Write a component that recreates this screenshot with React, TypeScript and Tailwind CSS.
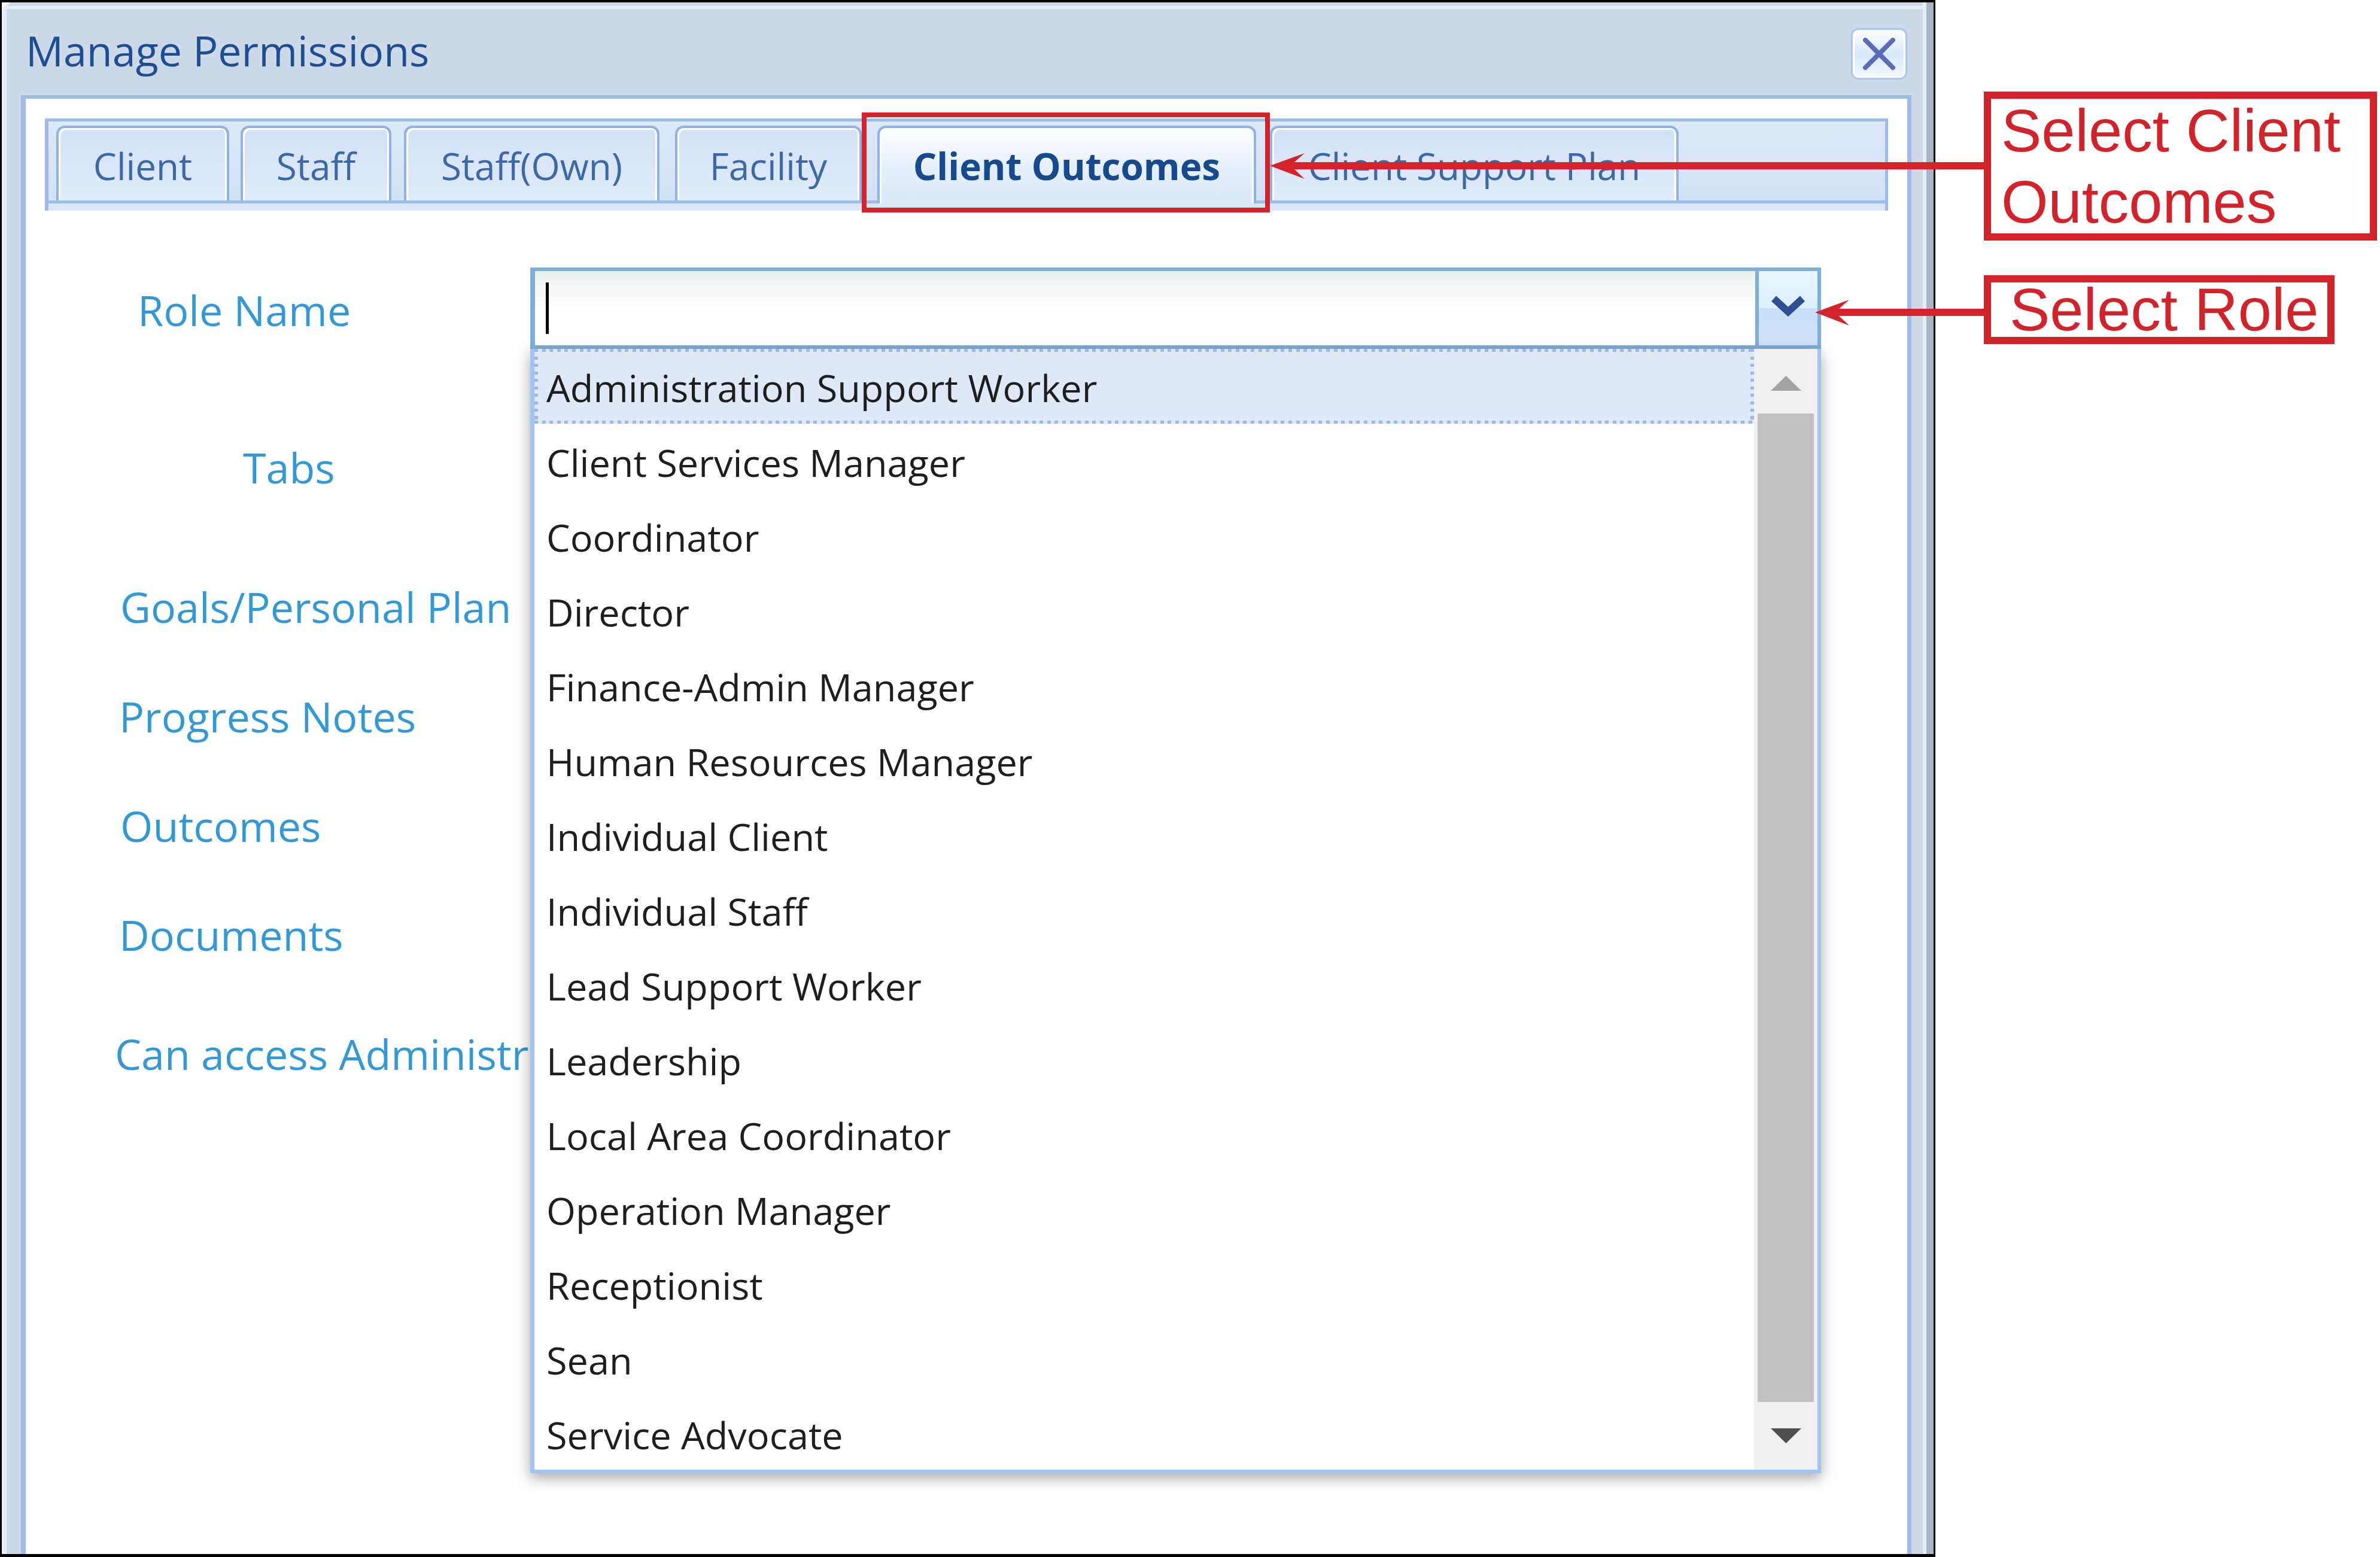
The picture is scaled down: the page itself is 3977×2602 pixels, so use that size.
import React from "react";

const roles = [
  "Administration Support Worker",
  "Client Services Manager",
  "Coordinator",
  "Director",
  "Finance-Admin Manager",
  "Human Resources Manager",
  "Individual Client",
  "Individual Staff",
  "Lead Support Worker",
  "Leadership",
  "Local Area Coordinator",
  "Operation Manager",
  "Receptionist",
  "Sean",
  "Service Advocate",
];

function Tab({ label, w, ml, active }: { label: string; w: string; ml: string; active?: boolean }) {
  if (active) {
    return (
      <div
        className={`${w} ${ml} relative z-10 -mb-[5px] h-[130px] flex-none rounded-t-[14px] border-[4px] border-b-0 border-[#8fb4e4] bg-gradient-to-b from-white via-[#e6f0fc] to-[#dce8f8] shadow-[inset_3px_3px_0_#ffffff,inset_-3px_0_0_#ffffff] flex justify-center pt-[21px]`}
      >
        <span className="text-[62px] leading-[85px] font-bold text-[#174a8c]">{label}</span>
      </div>
    );
  }
  return (
    <div
      className={`${w} ${ml} h-[125px] flex-none rounded-t-[14px] border-[4px] border-b-0 border-[#8fb4e4] bg-gradient-to-b from-[#d2e1f6] to-[#e1ecfb] shadow-[inset_3px_3px_0_#ffffff,inset_-3px_0_0_#ffffff] flex justify-center pt-[21px]`}
    >
      <span className="text-[62px] leading-[85px] text-[#3b69a8]">{label}</span>
    </div>
  );
}

function Label({ text, ml, mt }: { text: string; ml: string; mt: string }) {
  return (
    <div className={`${mt} h-[100px] flex items-center`}>
      <span className={`${ml} text-[70px] leading-[100px] whitespace-nowrap text-[#3399d6]`}>{text}</span>
    </div>
  );
}

export default function App() {
  return (
    <div
      className="relative flex w-[3977px] h-[2602px] bg-white overflow-hidden"
      style={{ fontFamily: "'Open Sans', 'Noto Sans', sans-serif" }}
    >
      {/* Dialog */}
      <div className="flex-none w-[3234px] h-[2602px] border-t-[4px] border-l-[3px] border-r-[3px] border-b-[5px] border-black">
        <div className="h-full flex flex-col bg-[#cdd9e6] border-l-[8px] border-l-[#e8eef6] border-r-[12px] border-r-[#a9b5c5] rounded-tl-[16px]">
          <div className="flex-1 flex flex-col border-r-[6px] border-r-[#e8eef6] min-h-0">
            <div className="h-[6px] flex-none" />
            <div className="h-[5px] flex-none bg-[#e8eef6]" />
            {/* Title row */}
            <div className="h-[144px] flex-none flex items-center justify-between pl-[32px] pr-[26px]">
              <span className="text-[70px] text-[#1d4d94] pb-[6px]">Manage Permissions</span>
              <div className="w-[94px] h-[86px] mt-[6px] rounded-[12px] border-[3px] border-[#a8c6ee] bg-gradient-to-b from-white via-[#d9e8fb] to-[#f4f8fe] shadow-[inset_0_0_0_3px_#ffffff] flex items-center justify-center">
                <svg width="54" height="54" viewBox="0 0 54 54">
                  <path d="M4 4 L50 50 M50 4 L4 50" stroke="#4a5fae" strokeWidth="8" strokeLinecap="round" opacity="0.9" />
                </svg>
              </div>
            </div>
            {/* Content */}
            <div className="flex-1 ml-[24px] mr-[19px] border-t-[6px] border-l-[8px] border-r-[7px] border-[#9dbde8] bg-white flex flex-col">
              {/* Tab strip */}
              <div className="mt-[33px] mx-[32px] h-[154px] flex-none border-t-[5px] border-l-[6px] border-r-[5px] border-[#9dbde8] bg-gradient-to-b from-[#dde9f9] to-[#d0e0f4] flex flex-col">
                <div className="h-[132px] flex items-end">
                  <Tab label="Client" w="w-[289px]" ml="ml-[13px]" />
                  <Tab label="Staff" w="w-[252px]" ml="ml-[19px]" />
                  <Tab label="Staff(Own)" w="w-[427px]" ml="ml-[21px]" />
                  <Tab label="Facility" w="w-[312px]" ml="ml-[26px]" />
                  <Tab label="Client Outcomes" w="w-[633px]" ml="ml-[26px]" active />
                  <Tab label="Client Support Plan" w="w-[683px]" ml="ml-[23px]" />
                </div>
                <div className="h-[5px] bg-[#9dbde8]" />
                <div className="h-[12px] bg-[#dce8f8]" />
              </div>

              {/* Form */}
              <div className="mt-[95px] flex flex-col">
                <div className="h-[136px] flex items-center">
                  <div className="w-[843px] flex-none pl-[187px] pt-[6px]">
                    <span className="text-[70px] leading-[100px] text-[#3399d6]">Role Name</span>
                  </div>
                  <div className="relative w-[2157px] h-[136px] flex-none">
                    <div className="h-full flex border-[6px] border-l-[8px] border-[#80aedb]">
                      <div className="flex-1 flex items-center bg-gradient-to-b from-[#eceeee] via-white to-white">
                        <div className="ml-[18px] w-[5px] h-[86px] bg-black" />
                      </div>
                      <div className="w-[104px] flex-none border-l-[6px] border-[#80aedb] flex flex-col relative">
                        <div className="h-1/2 bg-gradient-to-b from-[#eaf7ff] to-[#dbeffd]" />
                        <div className="h-1/2 bg-gradient-to-b from-[#c9e0f8] to-[#cfe3f9]" />
                        <div className="absolute inset-0 flex items-center justify-center pb-[8px]">
                          <svg width="58" height="36" viewBox="0 0 58 36">
                            <path d="M5 6 L29 28 L53 6" fill="none" stroke="#2f4f95" strokeWidth="12" />
                          </svg>
                        </div>
                      </div>
                    </div>

                    {/* Dropdown list */}
                    <div className="absolute left-0 top-full z-20 w-[2157px] h-[1879px] bg-white border-l-[7px] border-r-[6px] border-b-[6px] border-[#a3c4f3] shadow-[0_8px_22px_rgba(0,0,0,0.35)] flex">
                      <div className="w-[2038px] flex-none flex flex-col">
                        {roles.map((r, i) =>
                          i === 0 ? (
                            <div key={r} className="relative h-[125px] flex-none flex items-center pl-[20px] pt-[6px] bg-[#dfe8f6]">
                              <div className="absolute left-0 right-0 top-0 h-[5px] bg-[repeating-linear-gradient(90deg,#9db8e8_0px,#9db8e8_6px,transparent_6px,transparent_12.6px)]" />
                              <div className="absolute left-0 right-0 bottom-0 h-[5px] bg-[repeating-linear-gradient(90deg,#9db8e8_0px,#9db8e8_6px,transparent_6px,transparent_12.6px)]" />
                              <div className="absolute left-0 top-0 bottom-0 w-[6px] bg-[repeating-linear-gradient(180deg,#9db8e8_0px,#9db8e8_5px,transparent_5px,transparent_12.5px)]" />
                              <div className="absolute right-0 top-0 bottom-0 w-[6px] bg-[repeating-linear-gradient(180deg,#9db8e8_0px,#9db8e8_5px,transparent_5px,transparent_12.5px)]" />
                              <span className="relative text-[63px] text-[#1e1e1e] whitespace-nowrap">{r}</span>
                            </div>
                          ) : (
                            <div key={r} className="h-[125px] flex-none flex items-center pl-[20px] pt-[6px]">
                              <span className="text-[63px] text-[#1e1e1e] whitespace-nowrap">{r}</span>
                            </div>
                          )
                        )}
                      </div>
                      <div className="w-[106px] flex-none bg-[#f0f0f0] flex flex-col items-center pt-[45px]">
                        <svg width="51" height="25" viewBox="0 0 51 25">
                          <polygon points="0,25 25.5,0 51,25" fill="#a3a3a3" />
                        </svg>
                        <div className="mt-[38px] w-[94px] h-[1652px] bg-[#c1c1c1]" />
                        <svg className="mt-[44px]" width="51" height="25" viewBox="0 0 51 25">
                          <polygon points="0,0 51,0 25.5,25" fill="#505050" />
                        </svg>
                      </div>
                    </div>
                  </div>
                </div>

                <Label text="Tabs" ml="ml-[363px]" mt="mt-[148px]" />
                <Label text="Goals/Personal Plan" ml="ml-[158px]" mt="mt-[133px]" />
                <Label text="Progress Notes" ml="ml-[156px]" mt="mt-[83px]" />
                <Label text="Outcomes" ml="ml-[158px]" mt="mt-[83px]" />
                <Label text="Documents" ml="ml-[156px]" mt="mt-[82px]" />
                <div className="mt-[99px] h-[100px] flex items-center">
                  <div className="ml-[149px] w-[694px] overflow-hidden">
                    <span className="text-[70px] leading-[100px] whitespace-nowrap text-[#3399d6]">Can access Administration</span>
                  </div>
                </div>
              </div>
            </div>
          </div>
        </div>
      </div>

      {/* Annotation callouts */}
      <div
        className="flex flex-col ml-[81px]"
        style={{ fontFamily: "'Liberation Sans', Arial, sans-serif" }}
      >
        <div className="mt-[153px] w-[657px] h-[249px] border-[12px] border-[#d2232a] flex items-center pl-[17px]">
          <span className="text-[101px] leading-[119px] text-[#d2232a]">
            Select Client
            <br />
            Outcomes
          </span>
        </div>
        <div className="mt-[58px] w-[586px] h-[115px] border-[12px] border-[#d2232a] flex items-start pl-[31px]">
          <span className="text-[101px] leading-[91px] text-[#d2232a] whitespace-nowrap">Select Role</span>
        </div>
      </div>

      {/* Arrows and highlight box overlay */}
      <svg className="absolute left-0 top-0 pointer-events-none z-30" width="3977" height="2602" viewBox="0 0 3977 2602">
        <rect x="1444" y="192" width="674" height="159" fill="none" stroke="#d2232a" strokeWidth="8" />
        <rect x="2160" y="271" width="1160" height="12" fill="#d2232a" />
        <polygon points="2122,277 2180,256 2163,271 2163,283 2180,299" fill="#d2232a" />
        <rect x="3070" y="516" width="250" height="12" fill="#d2232a" />
        <polygon points="3033,522 3090,501 3073,516 3073,528 3090,544" fill="#d2232a" />
      </svg>
    </div>
  );
}
